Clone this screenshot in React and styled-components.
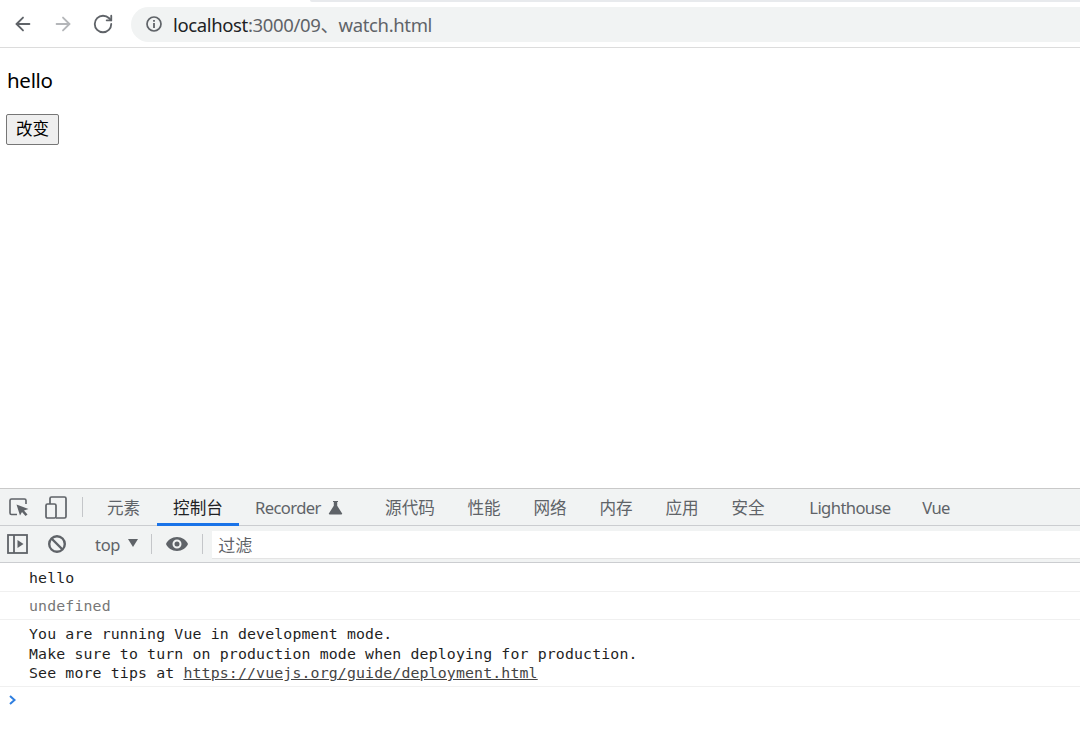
import React from "react";
import styled, { createGlobalStyle } from "styled-components";
import { ArrowLeft, ArrowRight, RotateCw } from "lucide-react";

const Global = createGlobalStyle`
  html, body { margin: 0; padding: 0; background: #fff; }
  body { font-family: "Noto Sans", "Noto Sans CJK SC", sans-serif; overflow: hidden; }
`;
const UI = `"Noto Sans", "Noto Sans CJK SC", sans-serif`;
const Mono = `"DejaVu Sans Mono", "Noto Sans CJK SC", monospace`;

const Page = styled.div`
  width: 1080px; height: 749px; display: flex; flex-direction: column; overflow: hidden; background: #fff;
`;
const BrowserBar = styled.header`
  height: 46px; flex: none; display: flex; align-items: center; padding: 1px 0 0 12px;
  box-sizing: content-box; border-bottom: 1px solid #dcdcdc; position: relative;
`;
const TopSliver = styled.div`
  position: absolute; top: 0; left: 310px; right: 0; height: 2px; background: #e8eaed; border-radius: 0 0 0 6px;
`;
const NavIcons = styled.div`
  display: flex; align-items: center; gap: 18px; color: #5f6368; width: 119px; flex: none;
`;
const Omnibox = styled.div`
  flex: 1; height: 35px; margin-right: -30px; background: #f1f3f3; border-radius: 18px; display: flex; align-items: center;
  padding-left: 14px; gap: 10px; font: 18.5px ${UI}; color: #5f6368; letter-spacing: -0.36px;
`;
const Host = styled.span` color: #202124; `;
const PageBody = styled.main`
  height: 440px; flex: none; padding: 0 6px; box-sizing: border-box;
`;
const Hello = styled.p`
  margin: 19px 0 0; font: 20.5px/27px ${UI}; color: #000; letter-spacing: -0.3px; padding-left: 1px;
`;
const ChangeButton = styled.button`
  display: block; margin-top: 20px; width: 53px; height: 31px; padding: 0 0 3px; border: 1px solid #767676; border-radius: 2px;
  background: #efefef; font: 16.5px "Noto Sans CJK SC", sans-serif; color: #000;
`;
const Devtools = styled.section`
  flex: 1; display: flex; flex-direction: column; border-top: 1px solid #c9c9c9; min-height: 0;
`;
const TabBar = styled.div`
  height: 37px; flex: none; display: flex; background: #f1f3f3; border-bottom: 1px solid #cbcdd0; align-items: stretch; box-sizing: border-box;
`;
const TabIcons = styled.div`
  display: flex; align-items: center; width: 90px; flex: none; padding-left: 8px; gap: 14px; box-sizing: border-box;
`;
const Divider = styled.span`
  width: 1px; height: 20px; background: #c4c6c9; flex: none;
`;
const Tab = styled.div`
  width: ${p => p.$w}px; flex: none; display: flex; align-items: center;
  justify-content: ${p => p.$indent ? "flex-start" : "center"};
  padding-left: ${p => p.$indent || 0}px; gap: 7px;
  font: 16.6px ${UI}; color: ${p => p.$active ? "#202124" : "#5f6368"};
  letter-spacing: ${p => p.$latin ? "-0.6px" : "0"};
  margin-right: ${p => p.$mr || 0}px; box-sizing: border-box; position: relative;
  ${p => p.$active && `&::after { content: ""; position: absolute; left: 0; right: 0; bottom: -1px; height: 3px; background: #1a73e8; }`}
`;
const FilterBar = styled.div`
  height: 37px; flex: none; display: flex; align-items: center; background: #f1f3f3; border-bottom: 1px solid #cbcdd0; padding-left: 7px; box-sizing: border-box;
`;
const Spacer = styled.span`
  width: ${p => p.$w}px; flex: none;
`;
const ContextSelect = styled.div`
  display: flex; align-items: center; gap: 8px; font: 16.5px ${UI}; color: #5f6368; letter-spacing: -0.3px;
`;
const Caret = styled.span`
  width: 0; height: 0; border-left: 5px solid transparent; border-right: 5px solid transparent; border-top: 8px solid #5f6368; margin-bottom: 3px;
`;
const FilterInput = styled.div`
  flex: 1; height: 27px; background: #fff; margin-left: 9px; box-shadow: 0 1px 0 #e4e4e4; display: flex; align-items: center; padding-left: 6px;
  font: 17px "Noto Sans CJK SC", sans-serif; color: #5f6368;
`;
const ConsoleRow = styled.div`
  padding: ${p => p.$first ? "6px" : "5px"} 0 ${p => p.$tall ? "2.5px" : "3px"} 29px; border-bottom: 1px solid #f0f0f0;
  font: 14.85px/${p => p.$tall ? "19.5px" : "19px"} ${Mono}; letter-spacing: 0.147px;
  color: ${p => p.$muted ? "#777" : "#1f1f1f"}; white-space: pre; flex: none;
`;
const DocLink = styled.span` text-decoration: underline; color: #444; `;
const Prompt = styled.div`
  padding: 7px 0 0 8px; line-height: 0;
`;

const Inspect = () => (
  <svg width="22" height="22" viewBox="0 0 22 22" fill="none">
    <path d="M9 18.500H3.500A1.500 1.500 0 0 1 2 17V4.500A1.500 1.500 0 0 1 3.500 3h13A1.500 1.500 0 0 1 18 4.500V8" stroke="#5f6368" strokeWidth="1.600" />
    <path d="M8.500 8.500l12 4.500-4.500 1.500 3.500 4-2 1.500-3.500-4-2 3.500z" fill="#5f6368" />
  </svg>
);
const Device = () => (
  <svg width="24" height="24" viewBox="0 0 24 24" fill="none" stroke="#5f6368" strokeWidth="1.700">
    <path d="M6 9V3.500A1.500 1.500 0 0 1 7.500 2h13A1.500 1.500 0 0 1 22 3.500v18a1.500 1.500 0 0 1-1.500 1.500H12" />
    <rect x="2" y="9" width="10" height="14" rx="1.500" />
  </svg>
);
const Flask = () => (
  <svg width="15" height="15" viewBox="0 0 15 15">
    <path d="M5 1h5v1H9.200v3.800L14 13.200a.8.8 0 0 1-.7 1.300H1.700a.8.8 0 0 1-.7-1.300L5.800 5.800V2H5z" fill="#5f6368" />
  </svg>
);
const Sidebar = () => (
  <svg width="22" height="22" viewBox="0 0 22 22" fill="none">
    <rect x="1" y="2" width="19" height="18" stroke="#5f6368" strokeWidth="1.800" />
    <path d="M7 2v18" stroke="#5f6368" strokeWidth="1.800" />
    <path d="M10.500 7l6 4-6 4z" fill="#5f6368" />
  </svg>
);
const Clear = () => (
  <svg width="20" height="20" viewBox="0 0 20 20" fill="none" stroke="#5f6368" strokeWidth="2.400">
    <circle cx="10" cy="10" r="7.800" /><path d="M4.500 4.500l11 11" />
  </svg>
);
const Eye = () => (
  <svg width="24" height="24" viewBox="0 0 24 24">
    <path fillRule="evenodd" fill="#5f6368" d="M12 5C7 5 2.700 8 1 12c1.700 4 6 7 11 7s9.300-3 11-7c-1.700-4-6-7-11-7zm0 11.500a4.500 4.500 0 1 1 0-9 4.500 4.500 0 0 1 0 9zm0-7a2.500 2.500 0 1 0 0 5 2.500 2.500 0 0 0 0-5z" />
  </svg>
);
const Info = () => (
  <svg width="18" height="18" viewBox="0 0 18 18" fill="none">
    <circle cx="9" cy="9" r="7" stroke="#5f6368" strokeWidth="1.700" />
    <path d="M9 8v5M9 5v1.700" stroke="#5f6368" strokeWidth="1.800" />
  </svg>
);
const Chevron = () => (
  <svg width="10" height="12" viewBox="0 0 10 12" fill="none">
    <path d="M2 2l4.500 4L2 10" stroke="#2f7fe0" strokeWidth="2" />
  </svg>
);

const tabs = [
  ["源代码", 82], ["性能", 66], ["网络", 66], ["内存", 66], ["应用", 66], ["安全", 66, 13],
];

export default function App() {
  return (
    <Page>
      <Global />
      <BrowserBar>
        <TopSliver />
        <NavIcons>
          <ArrowLeft size={22} strokeWidth={2} />
          <ArrowRight size={22} strokeWidth={2} color="#b4b6b9" />
          <RotateCw size={22} strokeWidth={2} />
        </NavIcons>
        <Omnibox>
          <Info />
          <span><Host>localhost</Host>:3000/09、watch.html</span>
        </Omnibox>
      </BrowserBar>
      <PageBody>
        <Hello>hello</Hello>
        <ChangeButton>改变</ChangeButton>
      </PageBody>
      <Devtools>
        <TabBar>
          <TabIcons>
            <Inspect />
            <Device />
            <Divider />
          </TabIcons>
          <Tab $w={67}>元素</Tab>
          <Tab $w={82} $active>控制台</Tab>
          <Tab $w={130} $indent={16} $latin>Recorder <Flask /></Tab>
          {tabs.map(([t, w, m]) => <Tab key={t} $w={w} $mr={m}>{t}</Tab>)}
          <Tab $w={112} $latin>Lighthouse</Tab>
          <Tab $w={60} $latin>Vue</Tab>
        </TabBar>
        <FilterBar>
          <Sidebar />
          <Spacer $w={18} />
          <Clear />
          <Spacer $w={28} />
          <ContextSelect>top <Caret /></ContextSelect>
          <Spacer $w={13} />
          <Divider />
          <Spacer $w={13} />
          <Eye />
          <Spacer $w={13} />
          <Divider />
          <FilterInput>过滤</FilterInput>
        </FilterBar>
        <ConsoleRow $first>hello</ConsoleRow>
        <ConsoleRow $muted>undefined</ConsoleRow>
        <ConsoleRow $tall>{"You are running Vue in development mode.\nMake sure to turn on production mode when deploying for production.\nSee more tips at "}<DocLink>https://vuejs.org/guide/deployment.html</DocLink></ConsoleRow>
        <Prompt><Chevron /></Prompt>
      </Devtools>
    </Page>
  );
}
